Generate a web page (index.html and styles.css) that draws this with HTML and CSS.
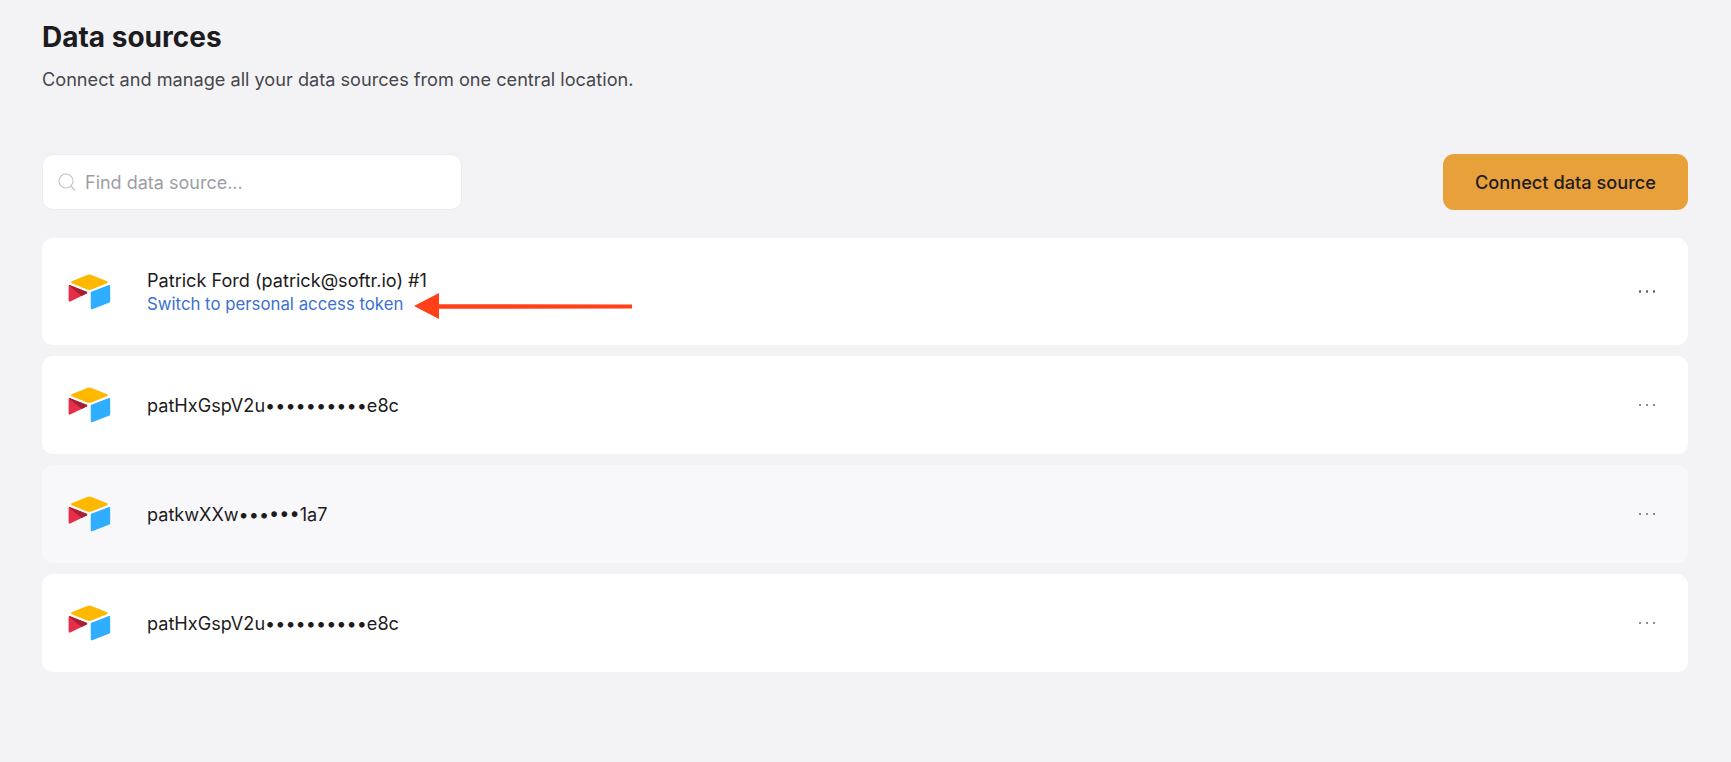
FILE: index.html
```html
<!DOCTYPE html>
<html lang="en">
<head>
  <meta charset="UTF-8" />
  <meta name="viewport" content="width=device-width, initial-scale=1.0"/>
  <title>Data sources</title>
  <link rel="stylesheet" href="styles.css">
</head>
<body>
  <svg class="defs" width="0" height="0" aria-hidden="true">
    <symbol id="airtable" viewBox="0 0 200 170">
      <path fill="#ffb800" d="M90.039 12.368 24.079 39.66c-3.667 1.519-3.63 6.729.062 8.192l66.235 26.266a24.58 24.58 0 0 0 18.12 0l66.236-26.266c3.69-1.463 3.729-6.673.06-8.191l-65.958-27.293a24.58 24.58 0 0 0-18.795 0"/>
      <path fill="#2fadff" d="M105.312 88.46v65.617c0 3.12 3.147 5.258 6.048 4.108l73.806-28.648a4.42 4.42 0 0 0 2.79-4.108V59.813c0-3.121-3.147-5.258-6.048-4.108l-73.806 28.648a4.42 4.42 0 0 0-2.79 4.108"/>
      <path fill="#e62e48" d="M88.078 91.846l-21.904 10.576-2.224 1.075-46.238 22.155c-2.93 1.414-6.672-.722-6.672-3.978V60.088c0-1.178.604-2.195 1.414-2.96a5 5 0 0 1 1.12-.84c1.104-.663 2.68-.84 4.02-.31L87.71 83.76c3.564 1.414 3.844 6.408.368 8.087"/>
      <path fill="#a81f36" d="M88.078 91.846l-21.904 10.576-53.72-45.295a5 5 0 0 1 1.12-.839c1.104-.663 2.68-.84 4.02-.31L87.71 83.76c3.564 1.414 3.844 6.408.368 8.087"/>
    </symbol>
  </svg>

  <main class="page">
    <h1>Data sources</h1>
    <p class="subtitle">Connect and manage all your data sources from one central location.</p>

    <div class="toolbar">
      <label class="search">
        <svg class="search-icon" viewBox="0 0 20 20" width="20" height="20" fill="none" stroke="#c4c4c9" stroke-width="1.2">
          <circle cx="9" cy="9" r="7"/>
          <path d="M14 14l4 4.5"/>
        </svg>
        <input type="text" placeholder="Find data source...">
      </label>
      <button class="connect-btn">Connect data source</button>
    </div>

    <div class="source-list">
      <div class="source source-first">
        <svg class="logo"><use href="#airtable"/></svg>
        <div class="source-info">
          <div class="source-name">Patrick Ford (patrick@softr.io) #1</div>
          <a class="source-link" href="#">Switch to personal access token</a>
        </div>
        <svg class="annotation" viewBox="0 0 218 26" width="218" height="26">
          <path fill="#ff4019" d="M0 13 25 0V11.2L218 11.6V15.4L25 15.8V26Z"/>
        </svg>
        <span class="more"><i></i><i></i><i></i></span>
      </div>

      <div class="source">
        <svg class="logo"><use href="#airtable"/></svg>
        <div class="source-name">patHxGspV2u••••••••••e8c</div>
        <span class="more"><i></i><i></i><i></i></span>
      </div>

      <div class="source source-hover">
        <svg class="logo"><use href="#airtable"/></svg>
        <div class="source-name">patkwXXw••••••1a7</div>
        <span class="more"><i></i><i></i><i></i></span>
      </div>

      <div class="source">
        <svg class="logo"><use href="#airtable"/></svg>
        <div class="source-name">patHxGspV2u••••••••••e8c</div>
        <span class="more"><i></i><i></i><i></i></span>
      </div>
    </div>
  </main>
</body>
</html>
```

FILE: styles.css
```css
* {
  box-sizing: border-box;
}

html, body {
  height: 100%;
}

body {
  margin: 0;
  background: #f3f3f6;
  font-family: Inter, "Liberation Sans", sans-serif;
  color: #1d1b20;
  overflow: hidden;
}

.defs {
  position: absolute;
}

.page {
  padding: 21px 43px 0 42px;
}

h1 {
  margin: 0;
  font-size: 28px;
  line-height: 32px;
  font-weight: 700;
  color: #1c1c1e;
}

.subtitle {
  margin: 14px 0 0;
  font-size: 18.15px;
  line-height: 24px;
  color: #46464c;
}

.toolbar {
  display: flex;
  justify-content: space-between;
  margin-top: 63px;
}

.search {
  display: flex;
  align-items: center;
  gap: 6px;
  width: 420px;
  height: 56px;
  padding-left: 14px;
  background: #fff;
  border: 1px solid #ececf0;
  border-radius: 11px;
}

.search-icon {
  flex: none;
}

.search input {
  flex: 1;
  min-width: 0;
  border: none;
  outline: none;
  background: transparent;
  font: inherit;
  font-size: 18px;
  color: #1d1b20;
}

.search input::placeholder {
  color: #9d9da5;
  opacity: 1;
}

.connect-btn {
  width: 245px;
  height: 56px;
  border: none;
  border-radius: 11px;
  background: #e8a13a;
  color: #221b22;
  font: inherit;
  font-size: 18.2px;
  font-weight: 500;
  cursor: pointer;
}

.source-list {
  display: flex;
  flex-direction: column;
  gap: 11px;
  margin-top: 28px;
}

.source {
  position: relative;
  display: flex;
  align-items: center;
  height: 98px;
  padding: 0 33px 0 24px;
  background: #fff;
  border-radius: 11px;
}

.source-first {
  height: 107px;
}

.source-hover {
  background: #f8f8fb;
}

.logo {
  flex: none;
  width: 47px;
  height: 40px;
  margin-right: 34px;
}

.source-name {
  font-size: 18.1px;
  line-height: 24px;
}

.source-link {
  display: block;
  margin-top: 1px;
  font-size: 16.8px;
  line-height: 22px;
  color: #3b6fd4;
  text-decoration: none;
}

.annotation {
  position: absolute;
  left: 372px;
  top: 55px;
}

.more {
  display: flex;
  gap: 4.5px;
  margin-left: auto;
}

.more i {
  width: 2.5px;
  height: 2.5px;
  border-radius: 50%;
  background: #66666c;
}
```
